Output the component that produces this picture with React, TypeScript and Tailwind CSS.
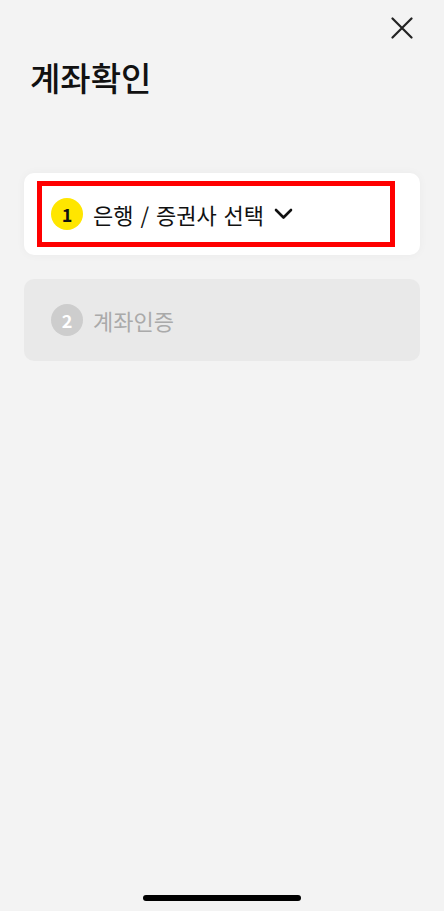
import React from "react";

export default function App() {
  return (
    <div
      className="relative w-full min-h-[911px] bg-[#f3f3f3] flex flex-col"
      style={{ fontFamily: '"Noto Sans CJK KR", "Noto Sans", sans-serif' }}
    >
      <div className="flex justify-end pt-[17px] pr-[31px]">
        <svg width="22" height="22" viewBox="0 0 22 22" fill="none">
          <path d="M1.5 1.5 L20.5 20.5 M20.5 1.5 L1.5 20.5" stroke="#222" strokeWidth="2.2" strokeLinecap="round" />
        </svg>
      </div>
      <h1 className="mt-[17px] pl-[30px] text-[33px] leading-[42px] font-medium text-[#111]">
        계좌확인
      </h1>
      <div className="mt-[75px] mx-6 flex flex-col gap-6">
        <div className="relative h-[82px] rounded-[10px] bg-white shadow-[0_0_10px_rgba(0,0,0,0.04)] flex items-center pl-[27px]">
          <div className="w-[32px] h-[32px] rounded-full bg-[#ffe600] flex items-center justify-center text-[18px] font-semibold text-[#111]">
            1
          </div>
          <span className="ml-[10px] text-[22px] text-[#111] leading-none [word-spacing:2px]">은행 / 증권사 선택</span>
          <svg className="ml-[10px]" width="19" height="12" viewBox="0 0 19 12" fill="none">
            <path d="M2 2 L9.5 9.5 L17 2" stroke="#111" strokeWidth="2.6" strokeLinecap="round" strokeLinejoin="round" />
          </svg>
          <div className="absolute left-[13px] top-[8px] w-[358px] h-[66px] border-[5px] border-[#ff0000] pointer-events-none" />
        </div>
        <div className="h-[82px] rounded-[10px] bg-[#e9e9e9] flex items-center pl-[27px]">
          <div className="w-[32px] h-[32px] rounded-full bg-[#cdcdcd] flex items-center justify-center text-[18px] font-semibold text-white">
            2
          </div>
          <span className="ml-[10px] text-[22px] text-[#aaaaaa] leading-none">계좌인증</span>
        </div>
      </div>
      <div className="absolute left-[143px] top-[895px] w-[158px] h-[6px] rounded-full bg-black" />
    </div>
  );
}
